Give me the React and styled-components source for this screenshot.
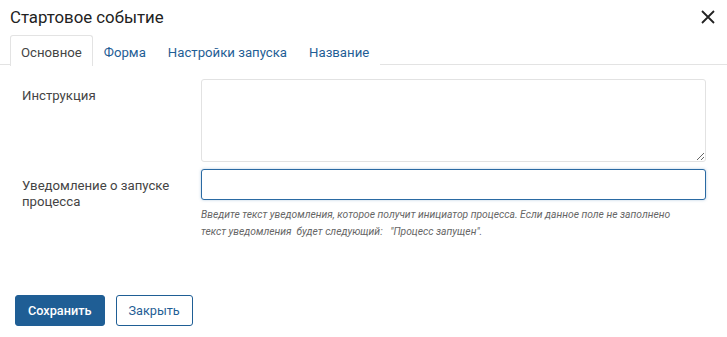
import React from "react";
import styled, { createGlobalStyle } from "styled-components";

const Global = createGlobalStyle`
  html, body { margin: 0; padding: 0; background: #fff; }
  body { font-family: Roboto, "Noto Sans", Arial, sans-serif; color: #333; }
  * { box-sizing: border-box; }
`;

const Dialog = styled.div`
  width: 727px;
  height: 337px;
  display: flex;
  flex-direction: column;
  background: #fff;
`;

const Header = styled.div`
  display: flex;
  align-items: center;
  justify-content: space-between;
  padding: 5px 11px 0 10px;
  height: 35px;
`;

const Title = styled.h1`
  margin: 0;
  font-size: 16.8px;
  font-weight: 400;
  color: #222;
  line-height: 22px;
  margin-top: -6px;
`;

const CloseIcon = styled.button`
  border: 0;
  background: none;
  padding: 0;
  width: 16px;
  height: 16px;
  margin-top: -6px;
  display: flex;
  cursor: pointer;
`;

const Tabs = styled.div`
  display: flex;
  padding-left: 10px;
  border-bottom: 1px solid #e3e3e3;
  height: 30px;
`;

const Tab = styled.div`
  padding: 2px 10px 0;
  height: 31px;
  display: flex;
  align-items: center;
  font-size: 13.2px;
  color: ${p => (p.$active ? "#444" : "#1f5e95")};
  background: #fff;
  border: 1px solid ${p => (p.$active ? "#e3e3e3" : "transparent")};
  border-bottom: 0;
  border-radius: 3px 3px 0 0;
  margin-bottom: -1px;
`;

const Body = styled.div`
  padding: 14px 21px 0 22px;
  display: flex;
  flex-direction: column;
  gap: 7px;
`;

const Row = styled.div`
  display: grid;
  grid-template-columns: 179px 1fr;
  align-items: start;
`;

const Label = styled.label`
  font-size: 13.2px;
  line-height: 15.5px;
  color: #444;
  padding-top: 9px;
`;

const TextArea = styled.textarea`
  width: 505px;
  height: 83px;
  border: 1px solid #e2e2e2;
  border-radius: 3px;
  resize: vertical;
  font-family: inherit;
  display: block;
  margin: 0;
  outline: none;
`;

const Input = styled.input`
  width: 505px;
  height: 31px;
  border: 1px solid #2a6aa3;
  border-radius: 3px;
  box-shadow: 0 0 3px rgba(42, 106, 163, 0.35);
  outline: none;
  display: block;
  margin: 0;
  font-family: inherit;
`;

const Help = styled.div`
  font-size: 10.3px;
  font-style: italic;
  color: #666;
  line-height: 17px;
  margin-top: 6px;
  white-space: pre;
`;

const Footer = styled.div`
  display: flex;
  gap: 11px;
  padding: 0 15px;
  margin-top: auto;
  margin-bottom: 11px;
`;

const Button = styled.button`
  height: 31px;
  padding: 0 ${p => (p.$primary ? 12 : 12)}px;
  border-radius: 3px;
  border: 1px solid #1f5e95;
  background: ${p => (p.$primary ? "#1f5e95" : "#fff")};
  color: ${p => (p.$primary ? "#fff" : "#1f5e95")};
  font-family: inherit;
  font-size: 12.7px;
  font-weight: ${p => (p.$primary ? 500 : 400)};
  cursor: pointer;
`;

export default function App() {
  return (
    <>
      <Global />
      <Dialog>
        <Header>
          <Title>Стартовое событие</Title>
          <CloseIcon aria-label="close">
            <svg width="16" height="16" viewBox="0 0 16 16">
              <path d="M2 2 L14 14 M14 2 L2 14" stroke="#222" strokeWidth="1.8" />
            </svg>
          </CloseIcon>
        </Header>
        <Tabs>
          <Tab $active>Основное</Tab>
          <Tab>Форма</Tab>
          <Tab>Настройки запуска</Tab>
          <Tab>Название</Tab>
        </Tabs>
        <Body>
          <Row>
            <Label>Инструкция</Label>
            <TextArea />
          </Row>
          <Row>
            <Label>Уведомление о запуске процесса</Label>
            <div>
              <Input />
              <Help>
                {"Введите текст уведомления, которое получит инициатор процесса. Если данное поле не заполнено\nтекст уведомления  будет следующий:   \"Процесс запущен\"."}
              </Help>
            </div>
          </Row>
        </Body>
        <Footer>
          <Button $primary>Сохранить</Button>
          <Button>Закрыть</Button>
        </Footer>
      </Dialog>
    </>
  );
}
